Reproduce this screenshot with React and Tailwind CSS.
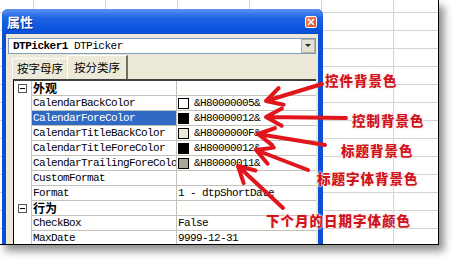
const rows = [
  { cat: '外观' },
  { name: 'CalendarBackColor', swatch: '#ffffff', value: '&H80000005&' },
  { name: 'CalendarForeColor', swatch: '#000000', value: '&H80000012&', selected: true },
  { name: 'CalendarTitleBackColor', swatch: '#ece9d8', value: '&H8000000F&' },
  { name: 'CalendarTitleForeColor', swatch: '#000000', value: '&H80000012&' },
  { name: 'CalendarTrailingForeColo', swatch: '#aca899', value: '&H80000011&' },
  { name: 'CustomFormat', value: '' },
  { name: 'Format', value: '1 - dtpShortDate' },
  { cat: '行为' },
  { name: 'CheckBox', value: 'False' },
  { name: 'MaxDate', value: '9999-12-31' },
]

// tail -> tip, in screenshot pixels
const arrows = [
  [[322, 84], [266, 101]],
  [[346, 118], [266, 117]],
  [[325, 145], [258, 134]],
  [[308, 170], [256, 150]],
  [[283, 208], [238, 166]],
]

function arrowPath([t, p]) {
  const dx = p[0] - t[0]
  const dy = p[1] - t[1]
  const len = Math.hypot(dx, dy)
  const ux = dx / len
  const uy = dy / len
  const head = 18
  const a = 0.5
  const w1 = [
    p[0] - head * (ux * Math.cos(a) - uy * Math.sin(a)),
    p[1] - head * (uy * Math.cos(a) + ux * Math.sin(a)),
  ]
  const w2 = [
    p[0] - head * (ux * Math.cos(-a) - uy * Math.sin(-a)),
    p[1] - head * (uy * Math.cos(-a) + ux * Math.sin(-a)),
  ]
  return `M${t[0]} ${t[1]} L${p[0]} ${p[1]} M${w1[0]} ${w1[1]} L${p[0]} ${p[1]} L${w2[0]} ${w2[1]}`
}

const notes = [
  { text: '控件背景色', left: 325, top: 72 },
  { text: '控制背景色', left: 352, top: 112 },
  { text: '标题背景色', left: 341, top: 142 },
  { text: '标题字体背景色', left: 317, top: 170 },
  { text: '下个月的日期字体颜色', left: 266, top: 212 },
]

const mono = "font-['Liberation_Mono','Noto_Sans_CJK_SC',monospace] text-[11px] tracking-[-0.6px]"

function PropRow({ row }) {
  if (row.cat) {
    return (
      <div className="flex h-[15px]">
        <div className="w-[17px] flex items-center justify-center">
          <div className="w-[9px] h-[9px] border border-[#555] flex items-center justify-center">
            <div className="w-[5px] h-px bg-black" />
          </div>
        </div>
        <div className="w-[145px] border-b border-l border-[#c4c2b8] pl-[1px] flex items-center font-['Noto_Sans_CJK_SC',sans-serif] font-bold text-[12px] leading-none text-black">
          {row.cat}
        </div>
        <div className="flex-1 border-b border-l border-[#c4c2b8]" />
      </div>
    )
  }
  return (
    <div className="flex h-[15px]">
      <div className="w-[17px]" />
      <div
        className={`w-[145px] border-b border-l border-[#c4c2b8] pl-[1px] flex items-center overflow-hidden whitespace-nowrap leading-none ${mono} ${
          row.selected ? 'bg-[#316ac5] text-white' : 'text-black'
        }`}
      >
        {row.name}
      </div>
      <div className={`flex-1 border-b border-l border-[#c4c2b8] flex items-center gap-[5px] pl-[1px] whitespace-nowrap leading-none text-black ${mono}`}>
        {row.swatch && <div className="w-[11px] h-[11px] border border-black" style={{ background: row.swatch }} />}
        <span>{row.value}</span>
      </div>
    </div>
  )
}

export default function App() {
  return (
    <div className="w-[459px] h-[266px] bg-white overflow-hidden">
      <div className="relative w-[439px] h-[245px] border-r border-b border-black shadow-[5px_6px_8px_rgba(0,0,0,0.45)] overflow-hidden bg-white bg-[linear-gradient(to_right,#d4d4d4_1px,transparent_1px),linear-gradient(to_bottom,#d4d4d4_1px,transparent_1px)] bg-size-[72px_18px] bg-position-[33px_12px] pl-[2px] pt-[9px]">
        {/* property window */}
        <div className="w-[321px] h-[260px] flex flex-col rounded-t-[6px] bg-[#0a4fd6] overflow-hidden">
          <div className="h-[25px] flex items-center justify-between pl-[5px] pr-[6px] bg-[linear-gradient(to_bottom,#5b94f4,#1f63e4_35%,#0a55de_80%,#0a4fd2)]">
            <span className="font-['Noto_Sans_CJK_SC',sans-serif] font-bold text-[13px] text-white leading-none [text-shadow:1px_1px_0_#0a2a8a]">属性</span>
            <div className="w-[12px] h-[12px] rounded-[2px] border border-white bg-[linear-gradient(135deg,#f08a6c,#d9461e)] flex items-center justify-center">
              <svg width="8" height="8" viewBox="0 0 8 8">
                <path d="M1 1 L7 7 M7 1 L1 7" stroke="#fff" strokeWidth="1.6" />
              </svg>
            </div>
          </div>
          <div className="flex-1 ml-[4px] mr-[5px] bg-[#ece9d8] flex flex-col">
            {/* object combo */}
            <div className="mt-[4px] mx-[2px] h-[16px] bg-white border border-[#7f9db9] flex items-center">
              <div className="flex-1 pl-[4px] flex items-baseline gap-[6px] font-['Liberation_Mono',monospace] text-[11px] tracking-[-0.5px] text-black leading-none">
                <span className="font-bold">DTPicker1</span>
                <span>DTPicker</span>
              </div>
              <div className="w-[14px] h-[14px] bg-[#e3e1d6] border border-[#b8b4a4] flex items-center justify-center">
                <svg width="6" height="4" viewBox="0 0 6 4">
                  <path d="M0 0 H6 L3 3 Z" fill="#222" />
                </svg>
              </div>
            </div>
            {/* tabs */}
            <div className="mt-[1px] h-[24px] flex items-end pl-[6px] font-['Noto_Sans_CJK_SC',sans-serif] text-[11.5px] text-black leading-none">
              <div className="h-[21px] px-[4px] flex items-center border-t border-l border-white">按字母序</div>
              <div className="h-[24px] px-[6px] flex items-center bg-[#ece9d8] border-t border-l border-white border-r-2 border-r-[#716f64]">按分类序</div>
            </div>
            {/* grid */}
            <div className="ml-[7px] mr-[2px] flex-1 bg-white border-l border-t-2 border-black border-t-[#404040]">
              {rows.map((r, i) => (
                <PropRow key={i} row={r} />
              ))}
            </div>
          </div>
        </div>

        {/* annotations */}
        <svg className="absolute inset-0 pointer-events-none" width="439" height="245">
          {arrows.map((a, i) => (
            <path key={i} d={arrowPath(a)} stroke="#e0161c" strokeWidth="4" fill="none" strokeLinecap="round" strokeLinejoin="round" />
          ))}
        </svg>
        {notes.map((n) => (
          <div
            key={n.text}
            className="absolute font-['Noto_Sans_CJK_SC',sans-serif] font-black text-[13.5px] leading-4 tracking-[1px] text-[#d0141c] whitespace-nowrap [text-shadow:0_0_2px_#fff,0_0_2px_#fff,0_0_3px_#fbb]"
            style={{ left: n.left, top: n.top }}
          >
            {n.text}
          </div>
        ))}
      </div>
    </div>
  )
}
